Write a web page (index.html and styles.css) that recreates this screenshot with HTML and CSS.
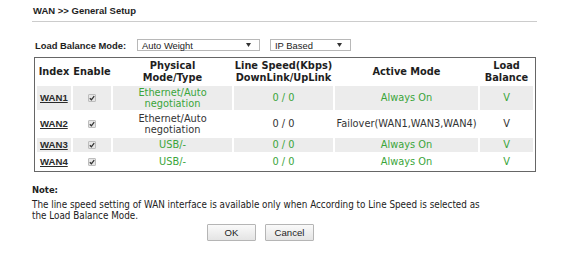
FILE: index.html
```html
<!DOCTYPE html>
<html>
<head>
<meta charset="utf-8">
<link rel="stylesheet" href="styles.css">
</head>
<body>
<div class="page">
  <div class="title">WAN &gt;&gt; General Setup</div>
  <div class="rule"></div>
  <div class="mode-row">
    <span class="label">Load Balance Mode:</span>
    <div class="select sel-mode"><span>Auto Weight</span><svg class="arrow" width="5" height="4" viewBox="0 0 5 4"><path d="M0 0H5L2.5 4Z" fill="#333"/></svg></div>
    <div class="select sel-base"><span>IP Based</span><svg class="arrow" width="5" height="4" viewBox="0 0 5 4"><path d="M0 0H5L2.5 4Z" fill="#333"/></svg></div>
  </div>
  <table class="wan">
    <colgroup>
      <col class="c-index"><col class="c-enable"><col class="c-phys"><col class="c-speed"><col class="c-active"><col class="c-lb">
    </colgroup>
    <tr class="head">
      <th>Index</th><th>Enable</th><th>Physical<br>Mode/Type</th><th>Line Speed(Kbps)<br>DownLink/UpLink</th><th>Active Mode</th><th>Load<br>Balance</th>
    </tr>
    <tr class="row shade tall">
      <td class="idx"><a href="#">WAN1</a></td>
      <td><span class="cb"><svg width="6" height="6" viewBox="0 0 6 6"><path d="M0.8 3.2L2.4 4.8L5.2 1.2" fill="none" stroke="#333" stroke-width="1.3"/></svg></span></td>
      <td class="g">Ethernet/Auto<br>negotiation</td>
      <td class="g">0 / 0</td>
      <td class="g">Always On</td>
      <td class="g">V</td>
    </tr>
    <tr class="row tall">
      <td class="idx"><a href="#">WAN2</a></td>
      <td><span class="cb"><svg width="6" height="6" viewBox="0 0 6 6"><path d="M0.8 3.2L2.4 4.8L5.2 1.2" fill="none" stroke="#333" stroke-width="1.3"/></svg></span></td>
      <td>Ethernet/Auto<br>negotiation</td>
      <td>0 / 0</td>
      <td>Failover(WAN1,WAN3,WAN4)</td>
      <td>V</td>
    </tr>
    <tr class="row shade short">
      <td class="idx"><a href="#">WAN3</a></td>
      <td><span class="cb"><svg width="6" height="6" viewBox="0 0 6 6"><path d="M0.8 3.2L2.4 4.8L5.2 1.2" fill="none" stroke="#333" stroke-width="1.3"/></svg></span></td>
      <td class="g">USB/-</td>
      <td class="g">0 / 0</td>
      <td class="g">Always On</td>
      <td class="g">V</td>
    </tr>
    <tr class="row short last">
      <td class="idx"><a href="#">WAN4</a></td>
      <td><span class="cb"><svg width="6" height="6" viewBox="0 0 6 6"><path d="M0.8 3.2L2.4 4.8L5.2 1.2" fill="none" stroke="#333" stroke-width="1.3"/></svg></span></td>
      <td class="g">USB/-</td>
      <td class="g">0 / 0</td>
      <td class="g">Always On</td>
      <td class="g">V</td>
    </tr>
  </table>
  <div class="note">
    <div class="note-title">Note:</div>
    <div class="note-text">The line speed setting of WAN interface is available only when According to Line Speed is selected as<br>the Load Balance Mode.</div>
  </div>
  <div class="buttons">
    <button class="btn">OK</button>
    <button class="btn">Cancel</button>
  </div>
</div>
</body>
</html>
```
FILE: styles.css
```css
html, body {
  margin: 0;
  padding: 0;
  background: #ffffff;
}
.page {
  width: 570px;
  height: 276px;
  font-family: "Liberation Sans", Arial, sans-serif;
  color: #333333;
}
.title {
  margin-left: 33px;
  padding-top: 5px;
  font-size: 9.5px;
  line-height: 11px;
  font-weight: bold;
  color: #1e1e1e;
}
.rule {
  margin-top: 5px;
  margin-left: 32px;
  width: 505px;
  height: 1px;
  background: #cccccc;
}
.mode-row {
  margin-top: 17px;
  height: 12px;
  display: flex;
  align-items: center;
}
.label {
  margin-left: 35px;
  width: 102px;
  font-size: 9.4px;
  font-weight: bold;
  color: #1e1e1e;
}
.select {
  box-sizing: border-box;
  height: 12px;
  border: 1px solid #b8b8b8;
  background: #ffffff;
  display: flex;
  align-items: center;
  justify-content: space-between;
  padding: 0 8px 0 4px;
  font-size: 9.4px;
  color: #222222;
}
.sel-mode {
  width: 123px;
}
.sel-base {
  width: 81px;
  margin-left: 10px;
}
.arrow {
  display: block;
}
.wan {
  margin-top: 6px;
  margin-left: 34px;
  width: 502px;
  table-layout: fixed;
  border-collapse: separate;
  border-spacing: 2px;
  border: 1px solid #666666;
  font-family: "DejaVu Sans", Verdana, sans-serif;
  font-size: 9.8px;
  color: #333333;
}
.c-index { width: 34px; }
.c-enable { width: 38px; }
.c-phys { width: 119px; }
.c-speed { width: 99px; }
.c-active { width: 143px; }
.c-lb { width: 53px; }
.wan th, .wan td {
  padding: 0;
  text-align: center;
  vertical-align: middle;
}
.wan th {
  height: 24px;
  font-weight: bold;
  line-height: 12px;
  color: #1e1e1e;
}
.row td {
  line-height: 11.5px;
}
.row.tall td { height: 24px; }
.row.short td { height: 14px; }
.row.last td { height: 15px; }
.shade td {
  background: #ececec;
}
.wan td.idx {
  text-align: left;
  padding-left: 3px;
}
.idx a {
  font-family: "Liberation Sans", Arial, sans-serif;
  font-weight: bold;
  font-size: 9.6px;
  color: #2a2a2a;
  text-decoration: underline;
}
.g {
  color: #3aa53a;
}
.cb {
  display: inline-flex;
  align-items: center;
  justify-content: center;
  box-sizing: border-box;
  width: 8px;
  height: 8px;
  border: 1px solid #bdbdbd;
  border-radius: 1px;
  background: #e6e6e6;
  vertical-align: middle;
}
.cb svg {
  display: block;
}
.note {
  margin-top: 12px;
  margin-left: 32px;
  font-family: "DejaVu Sans Condensed", "DejaVu Sans", sans-serif;
  color: #222222;
}
.note-title {
  font-weight: bold;
  font-size: 9.4px;
  line-height: 11px;
}
.note-text {
  margin-top: 4px;
  font-size: 9.8px;
  line-height: 11px;
}
.buttons {
  margin-top: 3px;
  padding-left: 207px;
  display: flex;
  gap: 9px;
}
.btn {
  box-sizing: border-box;
  width: 49px;
  height: 17px;
  padding: 0;
  border: 1px solid #b5b5b5;
  border-radius: 1px;
  background: linear-gradient(#fafafa, #e4e4e4);
  font-family: "Liberation Sans", Arial, sans-serif;
  font-size: 9.6px;
  color: #222222;
}
```
